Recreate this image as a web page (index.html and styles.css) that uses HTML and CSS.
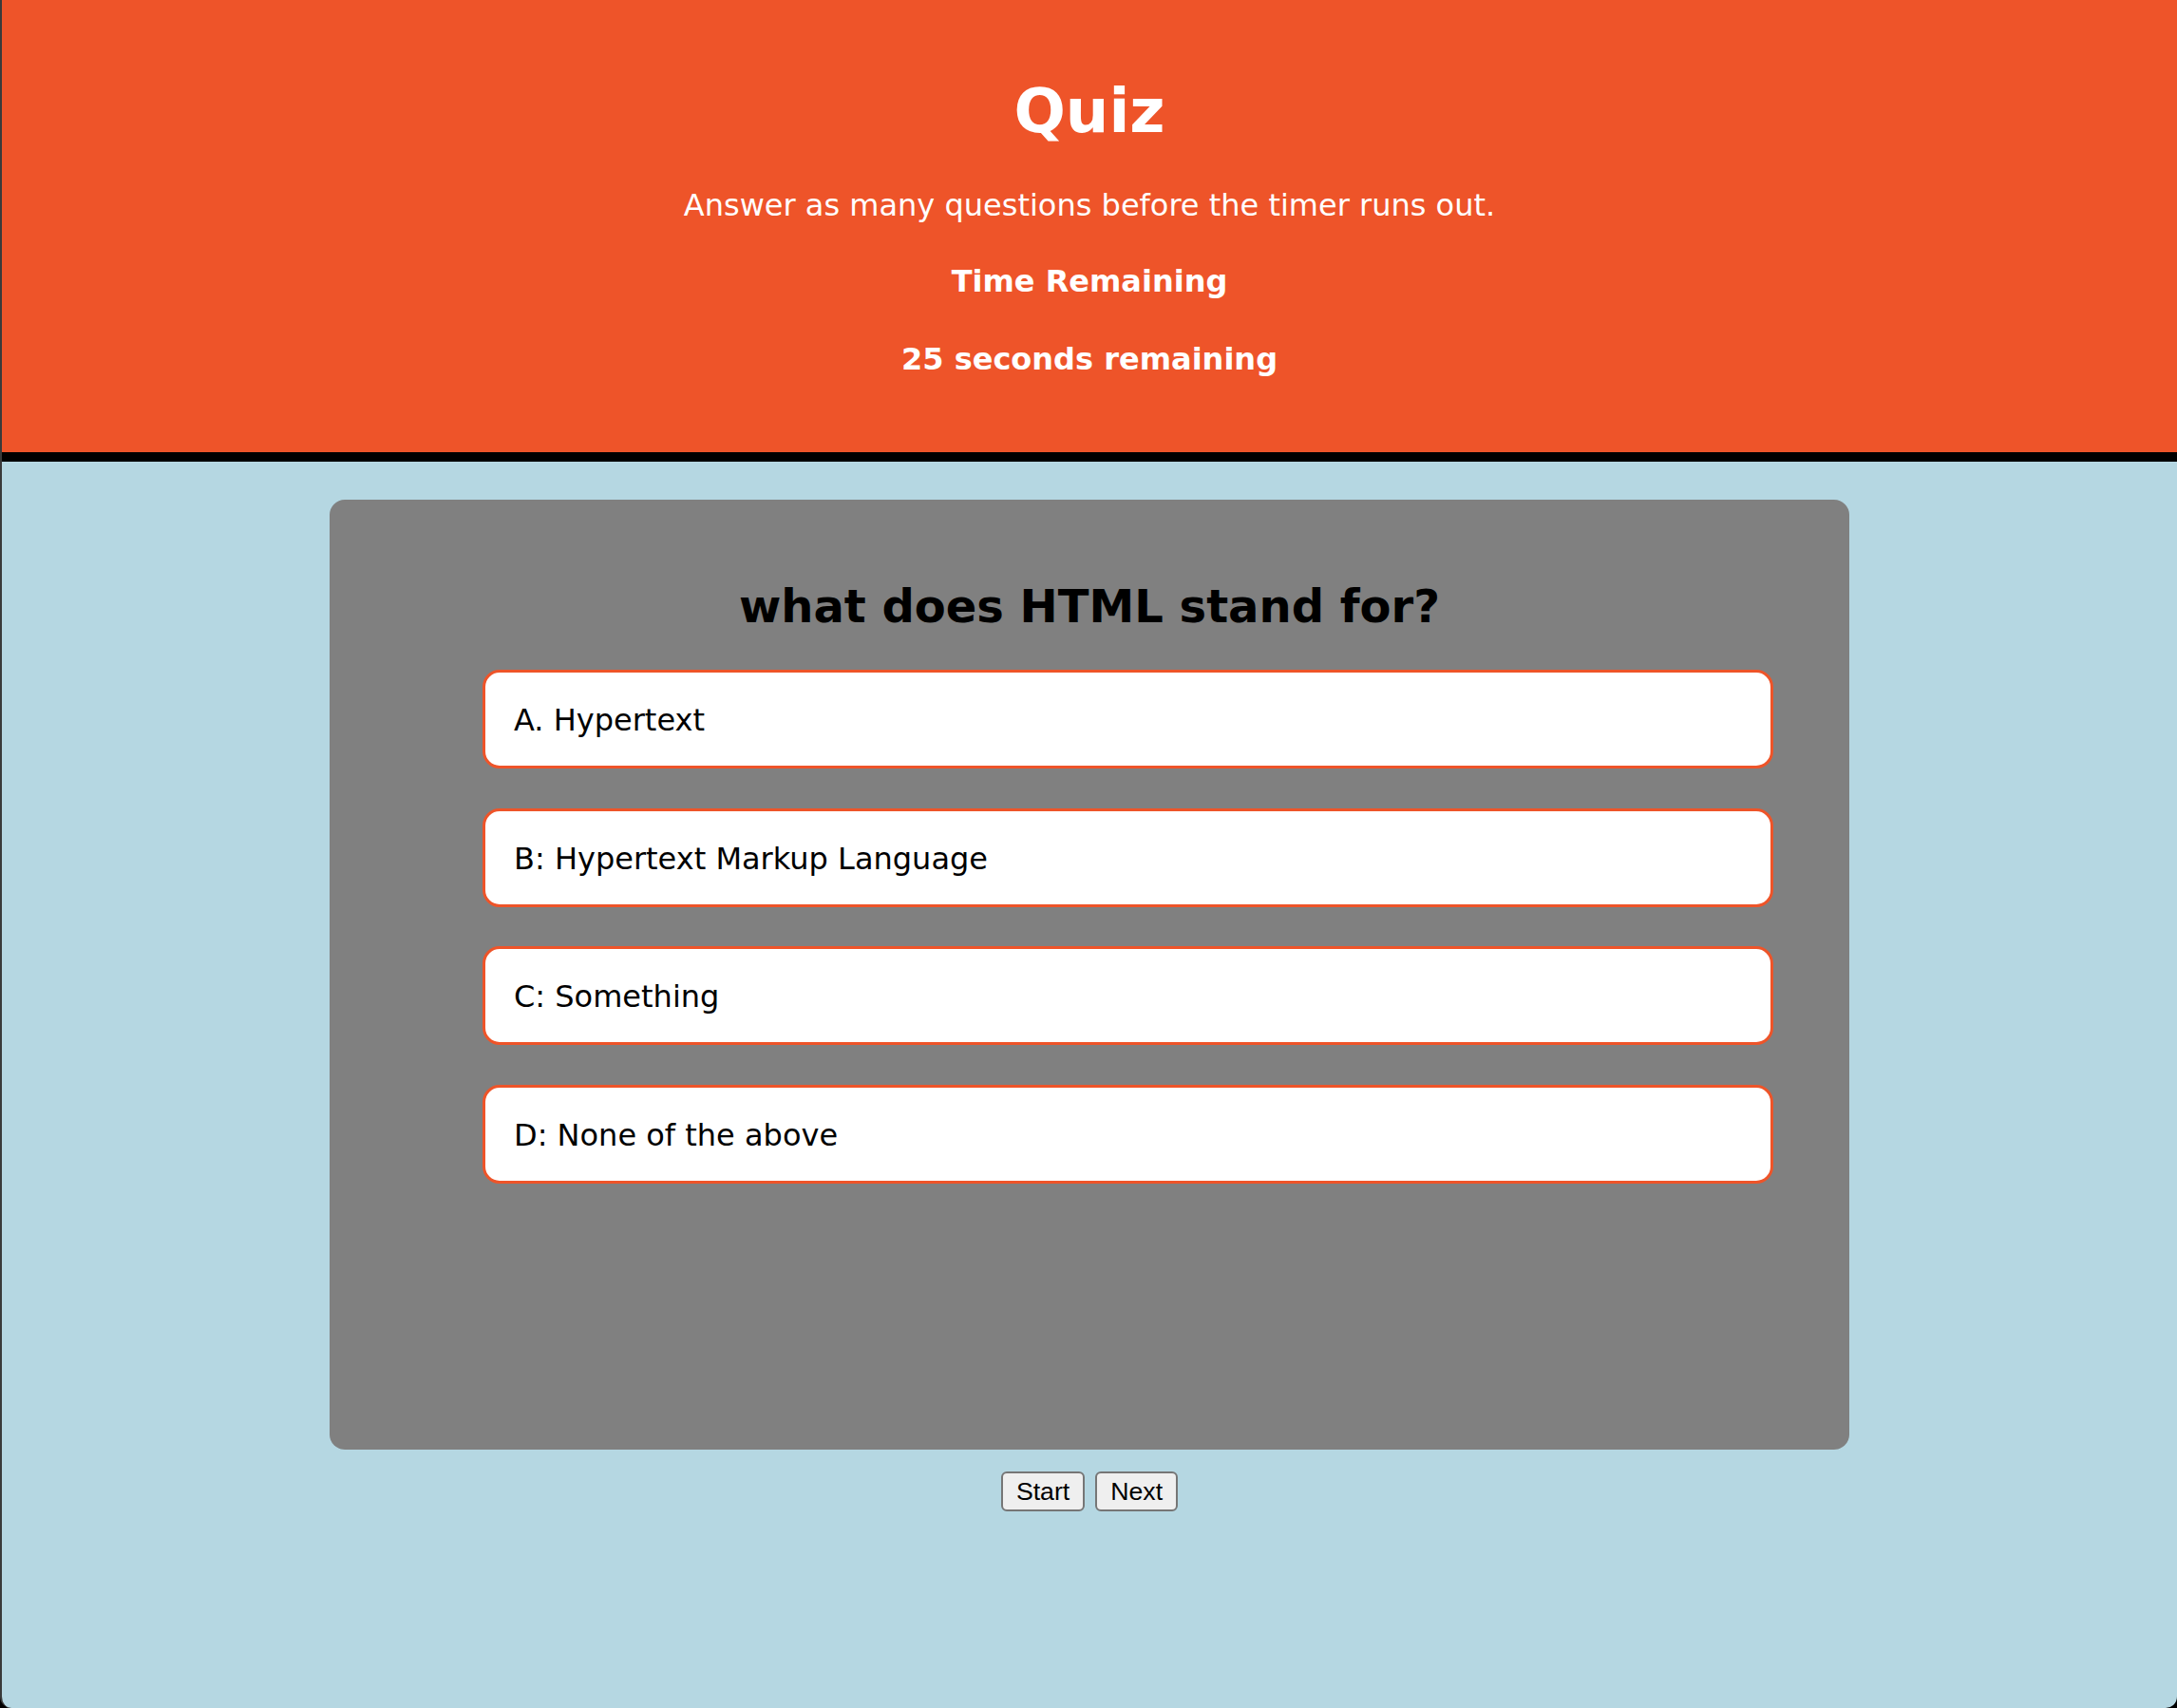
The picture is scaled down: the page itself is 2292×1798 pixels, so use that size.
FILE: index.html
```html
<!DOCTYPE html>
<html lang="en">
<head>
<meta charset="utf-8">
<title>Quiz</title>
<link rel="stylesheet" href="styles.css">
</head>
<body>
<div class="page">
  <header class="header">
    <h1 class="title">Quiz</h1>
    <p class="subtitle">Answer as many questions before the timer runs out.</p>
    <h4 class="timer-label">Time Remaining</h4>
    <h4 class="timer-value">25 seconds remaining</h4>
  </header>
  <main class="main">
    <section class="card">
      <h2 class="question">what does HTML stand for?</h2>
      <div class="options">
        <div class="option">A. Hypertext</div>
        <div class="option">B: Hypertext Markup Language</div>
        <div class="option">C: Something</div>
        <div class="option">D: None of the above</div>
      </div>
    </section>
    <div class="controls">
      <button class="btn" type="button">Start</button>
      <button class="btn" type="button">Next</button>
    </div>
  </main>
</div>
</body>
</html>
```

FILE: styles.css
```css
html {
  background: #000;
}
body {
  margin: 0;
  font-family: "DejaVu Sans", Verdana, sans-serif;
}
.page {
  min-height: 1798px;
  box-sizing: border-box;
  background: #b5d7e2;
  border-left: 2px solid #3a3a3a;
  border-bottom-left-radius: 12px;
  border-bottom-right-radius: 12px;
  display: flex;
  flex-direction: column;
}
.header {
  background: #ee5429;
  border-bottom: 10px solid #000;
  color: #fff;
  text-align: center;
  padding: 80px 0 79px;
}
.title {
  margin: 0 0 43px;
  font-size: 64px;
  line-height: 75px;
  font-weight: bold;
}
.subtitle {
  margin: 0 0 43px;
  font-size: 32px;
  line-height: 37px;
}
.timer-label,
.timer-value {
  margin: 0;
  font-size: 32px;
  line-height: 37px;
  font-weight: bold;
}
.timer-label {
  margin-bottom: 45px;
}
.main {
  display: flex;
  flex-direction: column;
  align-items: center;
  padding-top: 40px;
}
.card {
  width: 1600px;
  height: 1000px;
  box-sizing: border-box;
  background: #808080;
  border-radius: 16px;
  padding: 84px 80px 0;
}
.question {
  margin: 0 0 39px;
  font-size: 48px;
  line-height: 56px;
  font-weight: bold;
  text-align: center;
  color: #000;
}
.options {
  display: flex;
  flex-direction: column;
  gap: 41.5px;
  margin-left: 81px;
}
.option {
  background: #fff;
  border: 3px solid #ee5429;
  border-radius: 18px;
  padding: 32px 30px 29px;
  font-size: 32px;
  line-height: 37px;
  color: #000;
}
.controls {
  display: flex;
  gap: 11px;
  margin-top: 23px;
}
.btn {
  font-family: "Liberation Sans", Arial, sans-serif;
  font-size: 26.67px;
  line-height: 30px;
  padding: 4px 14px;
  border: 2px solid #767676;
  border-radius: 6px;
  background: #efefef;
  color: #000;
  margin: 0;
}
```
